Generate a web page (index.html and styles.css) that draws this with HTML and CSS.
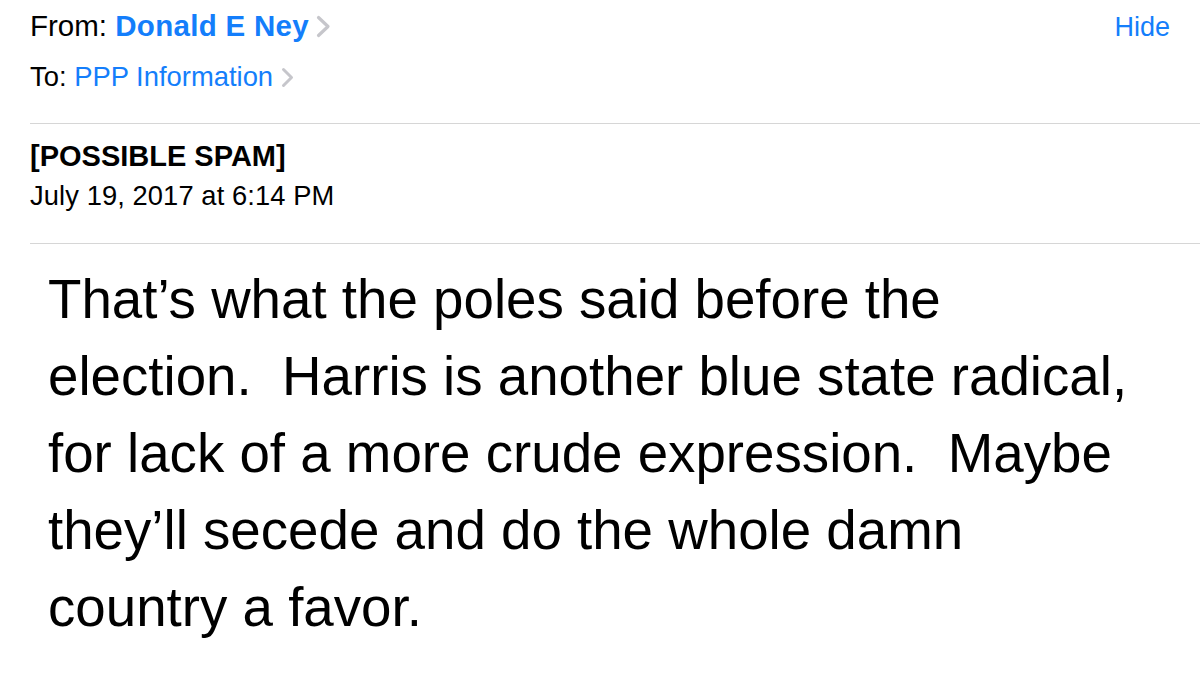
FILE: index.html
```html
<!DOCTYPE html>
<html>
<head>
<meta charset="utf-8">
<link rel="stylesheet" href="styles.css">
</head>
<body>
<div class="mail">
  <div class="header">
    <div class="row from-row">
      <div class="from"><span class="label">From: </span><span class="name">Donald E Ney</span><svg class="chev chev-big" width="15" height="23" viewBox="0 0 15 23"><polyline points="2.5,2.5 12,11.5 2.5,20.5" fill="none" stroke="#c6c6cb" stroke-width="3.2" stroke-linecap="round" stroke-linejoin="round"/></svg></div>
      <div class="hide">Hide</div>
    </div>
    <div class="row to-row">
      <span class="label">To: </span><span class="to-name">PPP Information</span><svg class="chev chev-small" width="13" height="21" viewBox="0 0 13 21"><polyline points="2.5,2.5 10.5,10.5 2.5,18.5" fill="none" stroke="#c6c6cb" stroke-width="3" stroke-linecap="round" stroke-linejoin="round"/></svg>
    </div>
  </div>
  <div class="sep sep-1"></div>
  <div class="meta">
    <div class="subject">[POSSIBLE SPAM]</div>
    <div class="date">July 19, 2017 at 6:14 PM</div>
  </div>
  <div class="sep sep-2"></div>
  <div class="body">
    <div class="line">That’s what the poles said before the</div>
    <div class="line">election.  Harris is another blue state radical,</div>
    <div class="line">for lack of a more crude expression.  Maybe</div>
    <div class="line">they’ll secede and do the whole damn</div>
    <div class="line">country a favor.</div>
  </div>
</div>
</body>
</html>
```
FILE: styles.css
```css
html, body {
  margin: 0;
  padding: 0;
  background: #ffffff;
}
body {
  font-family: "Liberation Sans", Arial, Helvetica, sans-serif;
  color: #000000;
  width: 1200px;
  height: 675px;
  overflow: hidden;
}
.mail {
  padding-left: 30px;
}
.header {
  padding-right: 30px;
}
.row {
  line-height: 40px;
  white-space: nowrap;
}
.from-row {
  display: flex;
  justify-content: space-between;
  align-items: baseline;
  padding-top: 6px;
  font-size: 29.5px;
}
.name {
  color: #147efb;
  font-weight: bold;
  letter-spacing: 0.3px;
}
.hide {
  color: #147efb;
  font-size: 27px;
}
.to-row {
  margin-top: 10px;
  font-size: 27.4px;
}
.to-name {
  color: #147efb;
}
.chev {
  display: inline-block;
}
.chev-big {
  margin-left: 7px;
  vertical-align: -2px;
}
.chev-small {
  margin-left: 8px;
  vertical-align: -2px;
}
.sep {
  height: 1px;
  background: #d6d6d6;
}
.sep-1 {
  margin-top: 26px;
}
.meta {
  padding-top: 14px;
}
.subject {
  font-size: 29px;
  font-weight: bold;
  line-height: 36px;
}
.date {
  margin-top: 4px;
  font-size: 27.3px;
  line-height: 36px;
  letter-spacing: 0.1px;
}
.sep-2 {
  margin-top: 29px;
}
.body {
  padding-top: 17px;
  padding-left: 18px;
  font-size: 54.7px;
  line-height: 77px;
}
.line {
  white-space: pre;
}
```
